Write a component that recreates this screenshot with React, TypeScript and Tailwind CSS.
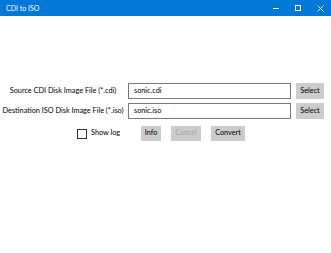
import React from "react";

export default function App() {
  const font = { fontFamily: 'Lato, "Open Sans", sans-serif' };
  return (
    <div className="w-[331px] h-[253px] bg-white flex flex-col overflow-hidden" style={font}>
      <div className="h-[16px] bg-[#0078d7] flex items-center text-white shrink-0">
        <span className="ml-[6px] text-[7px] leading-none">CDI to ISO</span>
        <div className="ml-auto flex items-center h-full">
          <div className="w-[22px] h-full flex items-center justify-center">
            <div className="w-[6px] h-px bg-white" />
          </div>
          <div className="w-[22px] h-full flex items-center justify-center">
            <div className="w-[6px] h-[6px] border border-white" />
          </div>
          <div className="w-[22px] h-full flex items-center justify-center">
            <svg width="7" height="7" viewBox="0 0 7 7">
              <path d="M0.5 0.5 L6.5 6.5 M6.5 0.5 L0.5 6.5" stroke="white" strokeWidth="0.9" />
            </svg>
          </div>
        </div>
      </div>
      <div className="flex flex-col pt-[67px]">
        <div className="flex items-center h-[16px]">
          <div className="w-[126px] shrink-0 flex justify-center text-[7.3px] text-black whitespace-nowrap">Source CDI Disk Image File (*.cdi)</div>
          <div className="ml-[2px] shrink-0 w-[163px] h-[16px] border border-[#7a7a7a] flex items-center pl-[5px] text-[7.3px] text-black">sonic.cdi</div>
          <div className="ml-[5px] shrink-0 w-[28px] h-[16px] bg-[#cccccc] flex items-center justify-center text-[7.3px] text-black">Select</div>
        </div>
        <div className="flex items-center h-[16px] mt-[4px]">
          <div className="w-[126px] shrink-0 flex justify-center text-[7.3px] text-black whitespace-nowrap">Destination ISO Disk Image File (*.iso)</div>
          <div className="ml-[2px] shrink-0 w-[163px] h-[16px] border border-[#7a7a7a] flex items-center pl-[5px] text-[7.3px] text-black">sonic.iso</div>
          <div className="ml-[5px] shrink-0 w-[28px] h-[16px] bg-[#cccccc] flex items-center justify-center text-[7.3px] text-black">Select</div>
        </div>
        <div className="flex items-center h-[15px] mt-[7px]">
          <div className="ml-[77px] shrink-0 w-[10px] h-[10px] border border-[#333333]" />
          <span className="ml-[4px] w-[40px] shrink-0 text-[7.3px] text-black">Show log</span>
          <div className="ml-[10px] shrink-0 w-[20px] h-[15px] bg-[#cccccc] flex items-center justify-center text-[7.3px] text-black">Info</div>
          <div className="ml-[10px] shrink-0 w-[30px] h-[15px] bg-[#cccccc] flex items-center justify-center text-[7.3px] text-[#a3a3a3]">Cancel</div>
          <div className="ml-[10px] shrink-0 w-[34px] h-[15px] bg-[#cccccc] flex items-center justify-center text-[7.3px] text-black">Convert</div>
        </div>
      </div>
    </div>
  );
}
